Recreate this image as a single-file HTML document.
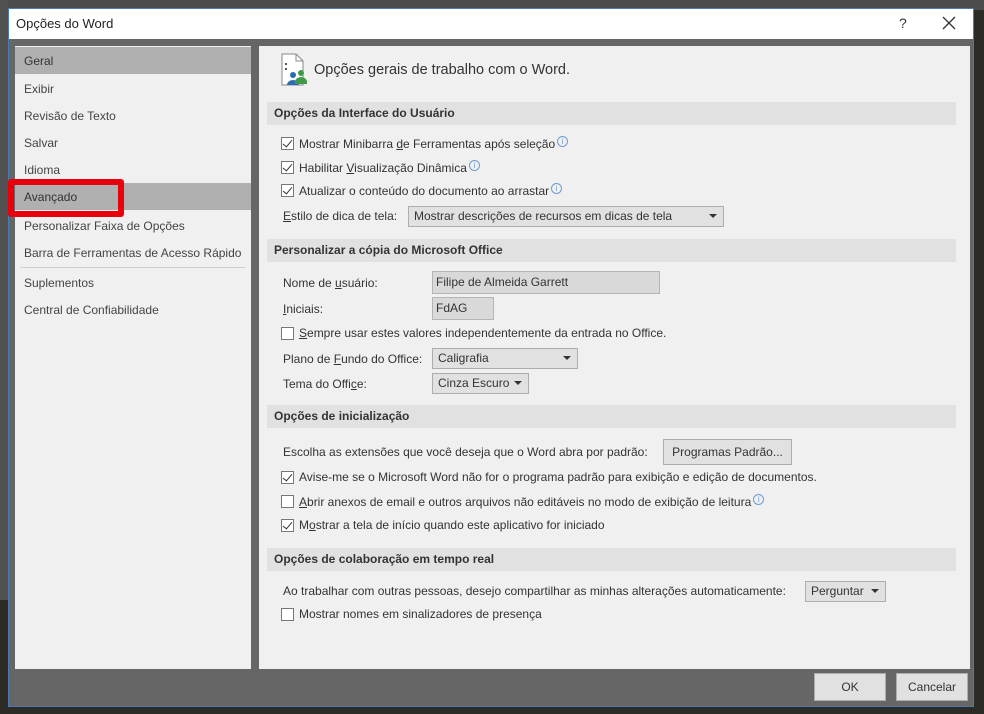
<!DOCTYPE html>
<html><head><meta charset="utf-8"><style>
*{margin:0;padding:0;box-sizing:border-box}
body{width:984px;height:714px;overflow:hidden;background:#2e2a26;font-family:"Liberation Sans",sans-serif;font-size:12px;color:#333;position:relative}
.a{position:absolute;white-space:nowrap}
.hdr{position:absolute;left:267px;width:689px;height:23px;background:#e1e1e1;font-weight:bold;font-size:12px;line-height:23px;padding-left:7px;color:#333}
.cb{position:absolute;left:281px;width:13px;height:13px;border:1px solid #777;background:#fff}
.cb.k::after{content:"";position:absolute;left:3px;top:0px;width:4px;height:8px;border:solid #333;border-width:0 1.5px 1.5px 0;transform:rotate(40deg)}
.t{position:absolute;white-space:nowrap;line-height:14px}
.inp{position:absolute;background:#d9d9d9;border:1px solid #b5b5b5;padding-left:3px;line-height:20px}
.dd{position:absolute;background:#e1e1e1;border:1px solid #adadad;padding-left:5px;line-height:18px}
.dd::after{content:"";position:absolute;right:6px;top:7px;border:4px solid transparent;border-top:4px solid #333;border-bottom:0}
.nav{position:absolute;left:15px;width:236px;height:27px;line-height:28px;padding-left:9px;color:#444}
.info{display:inline-block;width:11px;height:11px;border:1px solid #6c9bd2;border-radius:50%;font-size:8px;line-height:9px;text-align:center;color:#6c9bd2;vertical-align:4px;margin-left:2px}
.btn{position:absolute;background:#e1e1e1;border:1px solid #adadad;text-align:center;line-height:26px;color:#333}
</style></head><body>
<div class="a" style="left:0;top:0;width:984px;height:10px;background:#4c4c4c"></div>
<div class="a" style="left:0;top:0;width:8px;height:600px;background:#505050"></div>
<div class="a" style="left:8px;top:8px;width:966px;height:699px;background:#666;border:1px solid #4a7ab0"></div>
<div class="a" style="left:9px;top:9px;width:964px;height:30px;background:#fff"></div>
<div class="a" style="left:16px;top:16px;font-size:13px;color:#222">Opções do Word</div>
<div class="a" style="left:899px;top:15px;font-size:14px;color:#333">?</div>
<svg class="a" style="left:942px;top:16px" width="14" height="14" viewBox="0 0 14 14"><path d="M1 1L13 13M13 1L1 13" stroke="#333" stroke-width="1.3"/></svg>
<div class="a" style="left:15px;top:46px;width:236px;height:623px;background:#f0f0f0"></div>
<div class="a" style="left:259px;top:46px;width:711px;height:623px;background:#f0f0f0"></div>
<div class="nav" style="top:47px;background:#b0b0b0;color:#333">Geral</div>
<div class="nav" style="top:75px">Exibir</div>
<div class="nav" style="top:102px">Revisão de Texto</div>
<div class="nav" style="top:129px">Salvar</div>
<div class="nav" style="top:156px">Idioma</div>
<div class="nav" style="top:183px;background:#b0b0b0;color:#333">Avançado</div>
<div class="nav" style="top:212px">Personalizar Faixa de Opções</div>
<div class="nav" style="top:239px">Barra de Ferramentas de Acesso Rápido</div>
<div class="a" style="left:20px;top:267px;width:225px;height:1px;background:#d0d0d0"></div>
<div class="nav" style="top:269px">Suplementos</div>
<div class="nav" style="top:296px">Central de Confiabilidade</div>
<div class="a" style="left:8px;top:179px;width:116px;height:38px;border:6px solid #e8000c;border-radius:3px"></div>
<svg class="a" style="left:280px;top:53px" width="30" height="34" viewBox="0 0 30 34"><path d="M2 1h14l7 7v24H2z" fill="#fff" stroke="#888"/><path d="M16 1v7h7" fill="none" stroke="#888"/><rect x="5" y="10" width="2" height="2" fill="#555"/><rect x="5" y="15" width="2" height="2" fill="#555"/><circle cx="13" cy="22" r="3" fill="#2b6cb0"/><circle cx="21" cy="20" r="3" fill="#3f9a4a"/><path d="M7 32a6 5 0 0 1 12 0z" fill="#2b6cb0"/><path d="M15 29a6 5 0 0 1 12 0v2H15z" fill="#3f9a4a"/></svg>
<div class="a" style="left:314px;top:62px;font-size:14.5px;color:#333">Opções gerais de trabalho com o Word.</div>
<div class="hdr" style="top:102px">Opções da Interface do Usuário</div>
<div class="cb k" style="top:137px"></div><div class="t" style="left:299px;top:136px">Mostrar Minibarra <u>d</u>e Ferramentas após seleção<span class="info">i</span></div>
<div class="cb k" style="top:161px"></div><div class="t" style="left:299px;top:160px">Habilitar <u>V</u>isualização Dinâmica<span class="info">i</span></div>
<div class="cb k" style="top:184px"></div><div class="t" style="left:299px;top:183px">Atualizar o conteúdo do documento ao arrastar<span class="info">i</span></div>
<div class="t" style="left:283px;top:209px"><u>E</u>stilo de dica de tela:</div>
<div class="dd" style="left:408px;top:206px;width:316px;height:21px">Mostrar descrições de recursos em dicas de tela</div>
<div class="hdr" style="top:239px">Personalizar a cópia do Microsoft Office</div>
<div class="t" style="left:283px;top:276px">Nome de <u>u</u>suário:</div>
<div class="inp" style="left:432px;top:271px;width:228px;height:23px">Filipe de Almeida Garrett</div>
<div class="t" style="left:283px;top:302px"><u>I</u>niciais:</div>
<div class="inp" style="left:432px;top:297px;width:62px;height:23px">FdAG</div>
<div class="cb" style="top:327px"></div><div class="t" style="left:299px;top:326px"><u>S</u>empre usar estes valores independentemente da entrada no Office.</div>
<div class="t" style="left:283px;top:352px">Plano de <u>F</u>undo do Office:</div>
<div class="dd" style="left:432px;top:348px;width:146px;height:21px">Caligrafia</div>
<div class="t" style="left:283px;top:377px">Tema do Offi<u>c</u>e:</div>
<div class="dd" style="left:432px;top:373px;width:97px;height:21px">Cinza Escuro</div>
<div class="hdr" style="top:405px">Opções de inicialização</div>
<div class="t" style="left:283px;top:445px">Escolha as extensões que você deseja que o Word abra por padrão:</div>
<div class="btn" style="left:663px;top:439px;width:129px;height:26px;line-height:24px">Programas Padrão...</div>
<div class="cb k" style="top:471px"></div><div class="t" style="left:299px;top:470px">Avise-me se o Microsoft Word não for o programa padrão para exibição e edição de documentos.</div>
<div class="cb" style="top:495px"></div><div class="t" style="left:299px;top:494px"><u>A</u>brir anexos de email e outros arquivos não editáveis no modo de exibição de leitura<span class="info">i</span></div>
<div class="cb k" style="top:519px"></div><div class="t" style="left:299px;top:518px">M<u>o</u>strar a tela de início quando este aplicativo for iniciado</div>
<div class="hdr" style="top:548px">Opções de colaboração em tempo real</div>
<div class="t" style="left:283px;top:584px">Ao trabalhar com outras pessoas, desejo compartilhar as minhas alterações automaticamente:</div>
<div class="dd" style="left:805px;top:581px;width:81px;height:21px">Perguntar</div>
<div class="cb" style="top:608px"></div><div class="t" style="left:299px;top:607px">Mostrar nomes em sinalizadores de presença</div>
<div class="btn" style="left:814px;top:673px;width:72px;height:28px">OK</div>
<div class="btn" style="left:896px;top:673px;width:72px;height:28px">Cancelar</div>
</body></html>
